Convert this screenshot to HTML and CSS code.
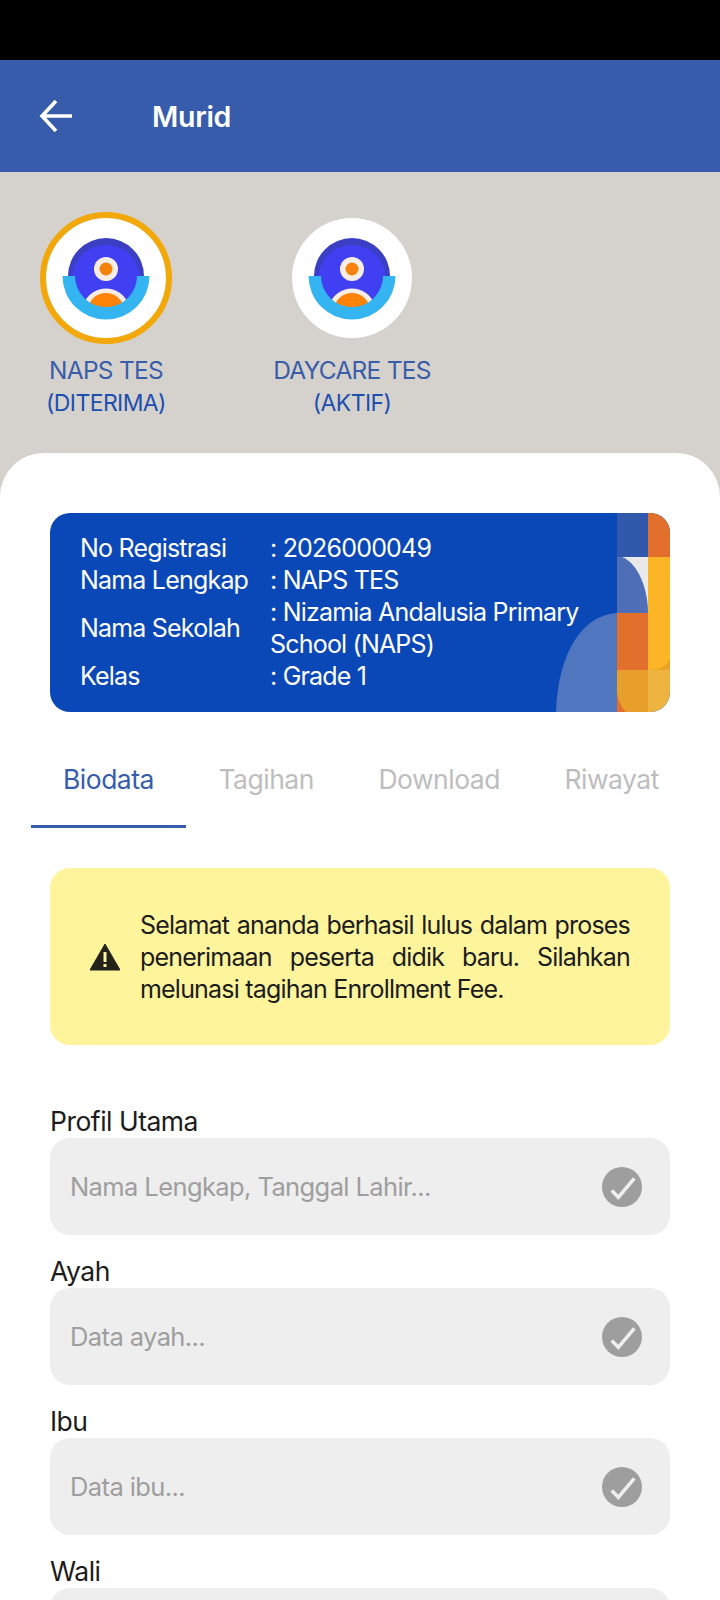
FILE: index.html
```html
<!DOCTYPE html>
<html lang="id">
<head>
    <meta charset="UTF-8">
    <title>Murid</title>
    <link rel="stylesheet" href="styles.css">
</head>
<body>
    <svg class="defs" width="0" height="0">
        <symbol id="logo-murid" viewBox="-44 -40 88 84">
            <circle cx="0" cy="0" r="38" fill="#3b3fc4"/>
            <circle cx="0" cy="3" r="34" fill="#4040f2"/>
            <path d="M-22 27a24 24 0 0 1 44 0a30 30 0 0 1 -44 0z" fill="#f7ede4"/>
            <path d="M-17 29a18 18 0 0 1 34 0a28 28 0 0 1 -34 0z" fill="#ff8307"/>
            <circle cx="0" cy="-7" r="12" fill="#f7ede4"/>
            <circle cx="0" cy="-7" r="6.5" fill="#f5820d"/>
            <path d="M-43.5 0H-31A31 31 0 0 0 31 0H43.5A43.5 43.5 0 0 1 -43.5 0z" fill="#35b4f2"/>
        </symbol>
        <symbol id="icon-check" viewBox="0 0 40 40">
            <circle cx="20" cy="20" r="20" fill="#9e9e9e"/>
            <path d="M9.700 23.500L16.300 30.300L32.300 11.300" fill="none" stroke="#eee" stroke-width="3.600"/>
        </symbol>
    </svg>

    <div class="statusbar"></div>

    <header class="topbar">
        <svg class="back" width="34" height="34" viewBox="0 0 34 34">
            <path d="M33 17H3M17 2L3 17L17 32" fill="none" stroke="#fff" stroke-width="3.600"/>
        </svg>
        <h1>Murid</h1>
    </header>

    <section class="students">
        <div class="student">
            <div class="avatar selected"><svg width="88" height="84"><use href="#logo-murid"/></svg></div>
            <p class="student-name">NAPS TES</p>
            <p class="student-status">(DITERIMA)</p>
        </div>
        <div class="student">
            <div class="avatar"><svg width="88" height="84"><use href="#logo-murid"/></svg></div>
            <p class="student-name">DAYCARE TES</p>
            <p class="student-status">(AKTIF)</p>
        </div>
    </section>

    <main class="sheet">
        <div class="reg-card">
            <svg class="reg-deco" width="114" height="199" viewBox="0 0 114 199">
                <rect x="61" width="31" height="44" fill="#3058ab"/>
                <rect x="92" width="22" height="44" fill="#e2702c"/>
                <rect x="61" y="44" width="31" height="56" fill="#e9e9ea"/>
                <path d="M61 44H66C82 50 92 76 92 100H61z" fill="#4e6fb8"/>
                <rect x="92" y="44" width="22" height="113" fill="#fcb525"/>
                <path d="M92 157C102 157 110 154 114 146V157z" fill="#e8a225"/>
                <rect x="61" y="100" width="31" height="57" fill="#e2702c"/>
                <rect x="61" y="157" width="31" height="42" fill="#e89e2a"/>
                <path d="M61 157V180C62 188 66 195 70 199H61z" fill="#e2702c"/>
                <path d="M92 157H114V199H92z" fill="#edb440"/>
                <path d="M61 100C26 102 2 140 0 199H61z" fill="#5076bf"/>
            </svg>
            <div class="reg-label">No Registrasi</div><div class="reg-value">: 2026000049</div>
            <div class="reg-label">Nama Lengkap</div><div class="reg-value">: NAPS TES</div>
            <div class="reg-label">Nama Sekolah</div><div class="reg-value">: Nizamia Andalusia Primary School (NAPS)</div>
            <div class="reg-label">Kelas</div><div class="reg-value">: Grade 1</div>
        </div>

        <nav class="tabs">
            <a class="tab active">Biodata</a>
            <a class="tab">Tagihan</a>
            <a class="tab">Download</a>
            <a class="tab">Riwayat</a>
        </nav>

        <div class="alert">
            <svg width="30" height="28" viewBox="0 0 30 28">
                <path d="M15 1L30 27H0z" fill="#23231c" stroke="#23231c" stroke-linejoin="round"/>
                <rect x="13.500" y="9" width="3" height="10" fill="#fef49c"/>
                <rect x="13.500" y="21" width="3" height="3" fill="#fef49c"/>
            </svg>
            <p>Selamat ananda berhasil lulus dalam proses penerimaan peserta didik baru. Silahkan melunasi tagihan Enrollment Fee.</p>
        </div>

        <div class="form-list">
            <div class="form-group">
                <label>Profil Utama</label>
                <div class="field"><span>Nama Lengkap, Tanggal Lahir...</span><svg width="40" height="40"><use href="#icon-check"/></svg></div>
            </div>
            <div class="form-group">
                <label>Ayah</label>
                <div class="field"><span>Data ayah...</span><svg width="40" height="40"><use href="#icon-check"/></svg></div>
            </div>
            <div class="form-group">
                <label>Ibu</label>
                <div class="field"><span>Data ibu...</span><svg width="40" height="40"><use href="#icon-check"/></svg></div>
            </div>
            <div class="form-group">
                <label>Wali</label>
                <div class="field"></div>
            </div>
        </div>
    </main>
</body>
</html>
```

FILE: styles.css
```css
html {
    height: 1600px;
    overflow: hidden;
}
body {
    font-family: 'Inter', sans-serif;
    margin: 0;
    padding: 0;
    height: 1600px;
    overflow: hidden;
    background: #d5d2cd;
    letter-spacing: -0.6px;
}
.defs {
    display: block;
    height: 0;
}
.statusbar {
    height: 60px;
    background: #000;
}
.topbar {
    height: 112px;
    background: #375cab;
    display: flex;
    align-items: center;
    padding-left: 39px;
    box-sizing: border-box;
}
.topbar h1 {
    margin: 0 0 0 79px;
    color: #fff;
    font-size: 28.500px;
    font-weight: 600;
    letter-spacing: -0.3px;
}
.students {
    height: 281px;
    display: flex;
    gap: 66px;
    padding: 40px 0 0 16px;
    box-sizing: border-box;
}
.student {
    width: 180px;
    display: flex;
    flex-direction: column;
    align-items: center;
}
.avatar {
    width: 132px;
    height: 132px;
    box-sizing: border-box;
    border-radius: 50%;
    border: 6px solid transparent;
    background: #fff;
    background-clip: padding-box;
    display: flex;
    align-items: center;
    justify-content: center;
}
.avatar.selected {
    border-color: #f3a80a;
}
.student-name,
.student-status {
    margin: 0;
    white-space: nowrap;
    line-height: 33px;
    font-size: 23px;
}
.student-name {
    margin-top: 10px;
    font-size: 24.500px;
    letter-spacing: -0.750px;
    color: #3a5daa;
}
.student-status {
    color: #1d4fb0;
}
.sheet {
    background: #fff;
    height: 1147px;
    border-radius: 44px 44px 0 0;
    padding-top: 60px;
    box-sizing: border-box;
}
.reg-card {
    position: relative;
    overflow: hidden;
    margin: 0 50px;
    height: 199px;
    box-sizing: border-box;
    padding: 19px 0 0 30px;
    border-radius: 20px;
    background: #0a48b8;
    color: #fff;
    font-size: 25px;
    letter-spacing: -0.800px;
    line-height: 32px;
    display: grid;
    grid-template-columns: 190px 320px;
    align-items: center;
    align-content: start;
}
.reg-deco {
    position: absolute;
    right: 0;
    top: 0;
}
.reg-label,
.reg-value {
    position: relative;
}
.tabs {
    display: flex;
    margin: 34px 0 0 31px;
}
.tab {
    padding: 17px 32.500px 30px 32px;
    font-size: 26.500px;
    letter-spacing: -0.500px;
    line-height: 32px;
    color: #bdbdbd;
    border-bottom: 3px solid transparent;
}
.tab.active {
    color: #375cab;
    border-bottom-color: #375cab;
}
.alert {
    margin: 40px 50px 0;
    height: 177px;
    box-sizing: border-box;
    padding: 0 40px;
    display: flex;
    align-items: center;
    gap: 20px;
    background: #fef49c;
    border-radius: 20px;
    color: #1c1c1c;
}
.alert svg {
    flex: none;
}
.alert p {
    margin: 0;
    font-size: 25px;
    letter-spacing: -0.800px;
    line-height: 32px;
    text-align: justify;
}
.form-list {
    margin: 60px 50px 0;
}
.form-group {
    margin-bottom: 20px;
}
.form-group label {
    display: block;
    height: 33px;
    line-height: 32px;
    font-size: 26.500px;
    letter-spacing: -0.500px;
    color: #1c1c1c;
}
.field {
    height: 97px;
    box-sizing: border-box;
    padding: 0 28px 0 20px;
    display: flex;
    align-items: center;
    justify-content: space-between;
    background: #eee;
    border-radius: 20px;
    font-size: 25.500px;
    color: #9e9e9e;
}
```
